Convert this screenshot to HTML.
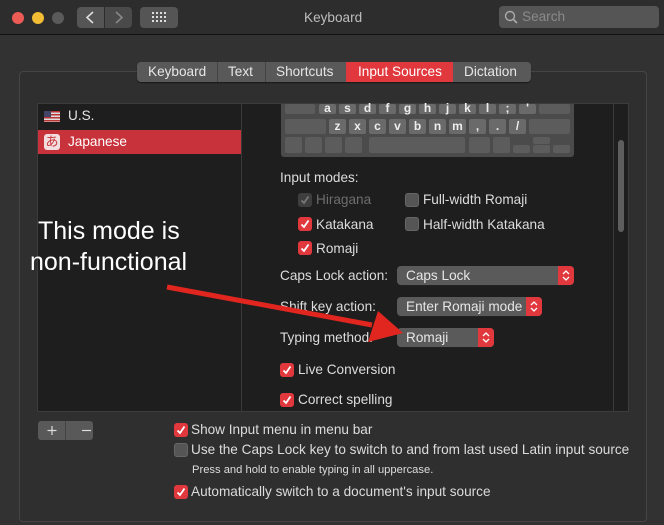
<!DOCTYPE html>
<html><head><meta charset="utf-8"><style>
*{margin:0;padding:0;box-sizing:border-box}
body{width:664px;height:525px;background:#323232;font-family:"Liberation Sans","Noto Sans CJK JP",sans-serif;font-size:13.6px;color:#dcdcdc;position:relative;overflow:hidden}
.a{position:absolute}
.t{position:absolute;white-space:nowrap;line-height:16px}
.cb{position:absolute;width:14px;height:14px;border-radius:3px;background:#e0383d}
.cb svg{position:absolute;left:1px;top:1px}
.cbo{position:absolute;width:14px;height:14px;border-radius:3px;background:#555;border:1px solid #666}
.pop{position:absolute;height:19px;background:#5a5a5a;border-radius:4px;color:#e6e6e6;padding-left:9px;line-height:19px;box-shadow:0 1px 0 #222}
.pop .s{position:absolute;right:0;top:0;width:16px;height:19px;background:#e0383d;border-radius:0 4px 4px 0}
.key{position:absolute;background:#6a6a6a;border-radius:2px;color:#eee;font-weight:bold;font-size:12px;text-align:center;line-height:15px}
.kd{position:absolute;background:#5c5c5c;border-radius:2px}
</style></head><body>
<div class="a" style="left:0;top:0;width:664px;height:35px;background:#2d2d2d;border-bottom:1px solid #111"></div>
<div class="a" style="left:12px;top:12px;width:12px;height:12px;border-radius:6px;background:#ec5c55"></div>
<div class="a" style="left:32px;top:12px;width:12px;height:12px;border-radius:6px;background:#f2bc34"></div>
<div class="a" style="left:52px;top:12px;width:12px;height:12px;border-radius:6px;background:#5a5a5a"></div>
<div class="a" style="left:77px;top:7px;width:27px;height:21px;background:#555;border-radius:4px 0 0 4px"></div>
<div class="a" style="left:105px;top:7px;width:27px;height:21px;background:#4a4a4a;border-radius:0 4px 4px 0"></div>
<svg class="a" style="left:77px;top:7px" width="56" height="21"><path d="M16 5 L10 10.5 L16 16" stroke="#ddd" stroke-width="1.6" fill="none"/><path d="M39 5 L45 10.5 L39 16" stroke="#888" stroke-width="1.6" fill="none"/></svg>
<div class="a" style="left:140px;top:7px;width:38px;height:21px;background:#555;border-radius:4px"></div>
<svg class="a" style="left:152px;top:12px" width="14" height="11" fill="#ddd"><rect x="0" y="0" width="2" height="2"/><rect x="4" y="0" width="2" height="2"/><rect x="8" y="0" width="2" height="2"/><rect x="12" y="0" width="2" height="2"/><rect x="0" y="4" width="2" height="2"/><rect x="4" y="4" width="2" height="2"/><rect x="8" y="4" width="2" height="2"/><rect x="12" y="4" width="2" height="2"/><rect x="0" y="8" width="2" height="2"/><rect x="4" y="8" width="2" height="2"/><rect x="8" y="8" width="2" height="2"/><rect x="12" y="8" width="2" height="2"/></svg>
<div class="t" style="left:304px;top:10px;color:#bdbdbd">Keyboard</div>
<div class="a" style="left:499px;top:6px;width:160px;height:22px;background:#555;border-radius:4px"></div>
<svg class="a" style="left:504px;top:10px" width="14" height="14"><circle cx="6" cy="6" r="4.5" stroke="#aaa" stroke-width="1.4" fill="none"/><path d="M9.5 9.5 L13 13" stroke="#aaa" stroke-width="1.6"/></svg>
<div class="t" style="left:522px;top:9px;color:#8a8a8a">Search</div>
<!-- group box -->
<div class="a" style="left:19px;top:71px;width:628px;height:451px;border:1px solid #454545;border-radius:4px;background:#2f2f2f"></div>
<!-- tabs -->
<div class="a" style="left:137px;top:62px;width:394px;height:20px;background:#595959;border-radius:4px;box-shadow:0 1px 1px #1a1a1a"></div>
<div class="a" style="left:346px;top:62px;width:107px;height:20px;background:#e0383d"></div>
<div class="a" style="left:217px;top:62px;width:1px;height:20px;background:#444"></div>
<div class="a" style="left:265px;top:62px;width:1px;height:20px;background:#444"></div>
<div class="t" style="left:148px;top:64px;color:#e6e6e6">Keyboard</div>
<div class="t" style="left:228px;top:64px;color:#e6e6e6">Text</div>
<div class="t" style="left:276px;top:64px;color:#e6e6e6">Shortcuts</div>
<div class="t" style="left:358px;top:64px;color:#fff">Input Sources</div>
<div class="t" style="left:464px;top:64px;color:#e6e6e6">Dictation</div>
<!-- list -->
<div class="a" style="left:37px;top:103px;width:592px;height:309px;background:#1e1e1e;border:1px solid #3c3c3c"></div>
<div class="a" style="left:241px;top:104px;width:1px;height:307px;background:#3a3a3a"></div>
<div class="a" style="left:613px;top:104px;width:1px;height:307px;background:#3a3a3a"></div>
<div class="a" style="left:618px;top:140px;width:6px;height:92px;background:#5e5e5e;border-radius:3px"></div>
<div class="a" style="left:38px;top:130px;width:203px;height:24px;background:#c8323b"></div>
<svg class="a" style="left:44px;top:111px" width="16" height="11"><rect width="16" height="11" fill="#ddd"/><rect y="0" width="16" height="1.5" fill="#b33"/><rect y="3" width="16" height="1.5" fill="#b33"/><rect y="6" width="16" height="1.5" fill="#b33"/><rect y="9" width="16" height="1.5" fill="#b33"/><rect width="7" height="6" fill="#446"/></svg>
<div class="t" style="left:68px;top:108px;color:#e6e6e6">U.S.</div>
<div class="a" style="left:44px;top:134px;width:16px;height:16px;background:#f2dede;border-radius:3px;color:#c8323b;font-size:13px;line-height:16px;text-align:center">あ</div>
<div class="t" style="left:68px;top:134px;color:#fff">Japanese</div>
<!-- keyboard -->
<div class="a" style="left:281px;top:104px;width:293px;height:53px;background:#4b4b4b;border-radius:0 0 3px 3px"></div>
<div class="kd" style="left:285px;top:104px;width:30px;height:10px"></div>
<div class="key" style="left:319px;top:104px;width:17px;height:10px;line-height:8px">a</div>
<div class="key" style="left:339px;top:104px;width:17px;height:10px;line-height:8px">s</div>
<div class="key" style="left:359px;top:104px;width:17px;height:10px;line-height:8px">d</div>
<div class="key" style="left:379px;top:104px;width:17px;height:10px;line-height:8px">f</div>
<div class="key" style="left:399px;top:104px;width:17px;height:10px;line-height:8px">g</div>
<div class="key" style="left:419px;top:104px;width:17px;height:10px;line-height:8px">h</div>
<div class="key" style="left:439px;top:104px;width:17px;height:10px;line-height:8px">j</div>
<div class="key" style="left:459px;top:104px;width:17px;height:10px;line-height:8px">k</div>
<div class="key" style="left:479px;top:104px;width:17px;height:10px;line-height:8px">l</div>
<div class="key" style="left:499px;top:104px;width:17px;height:10px;line-height:8px">;</div>
<div class="key" style="left:519px;top:104px;width:17px;height:10px;line-height:8px">'</div>
<div class="kd" style="left:539px;top:104px;width:31px;height:10px"></div>
<div class="kd" style="left:285px;top:119px;width:41px;height:15px"></div>
<div class="key" style="left:329px;top:119px;width:17px;height:15px">z</div>
<div class="key" style="left:349px;top:119px;width:17px;height:15px">x</div>
<div class="key" style="left:369px;top:119px;width:17px;height:15px">c</div>
<div class="key" style="left:389px;top:119px;width:17px;height:15px">v</div>
<div class="key" style="left:409px;top:119px;width:17px;height:15px">b</div>
<div class="key" style="left:429px;top:119px;width:17px;height:15px">n</div>
<div class="key" style="left:449px;top:119px;width:17px;height:15px">m</div>
<div class="key" style="left:469px;top:119px;width:17px;height:15px">,</div>
<div class="key" style="left:489px;top:119px;width:17px;height:15px">.</div>
<div class="key" style="left:509px;top:119px;width:17px;height:15px">/</div>
<div class="kd" style="left:529px;top:119px;width:41px;height:15px"></div>
<div class="kd" style="left:285px;top:137px;width:17px;height:16px"></div>
<div class="kd" style="left:305px;top:137px;width:17px;height:16px"></div>
<div class="kd" style="left:325px;top:137px;width:17px;height:16px"></div>
<div class="kd" style="left:345px;top:137px;width:17px;height:16px"></div>
<div class="kd" style="left:369px;top:137px;width:96px;height:16px"></div>
<div class="kd" style="left:469px;top:137px;width:21px;height:16px"></div>
<div class="kd" style="left:493px;top:137px;width:17px;height:16px"></div>
<div class="kd" style="left:513px;top:145px;width:17px;height:8px"></div>
<div class="kd" style="left:533px;top:137px;width:17px;height:7px"></div>
<div class="kd" style="left:533px;top:145px;width:17px;height:8px"></div>
<div class="kd" style="left:553px;top:145px;width:17px;height:8px"></div>
<!-- right pane -->
<div class="t" style="left:280px;top:170px">Input modes:</div>
<div class="a" style="left:298px;top:193px;width:14px;height:14px;border-radius:3px;background:#3e3e3e"></div>
<svg class="a" style="left:299px;top:194px" width="12" height="12"><path d="M2.5 6.5 L5 9 L9.5 2.5" stroke="#777" stroke-width="1.8" fill="none"/></svg>
<div class="t" style="left:316px;top:192px;color:#6e6e6e">Hiragana</div>
<div class="cbo" style="left:405px;top:193px"></div>
<div class="t" style="left:423px;top:192px">Full-width Romaji</div>
<div class="cb" style="left:298px;top:217px"><svg width="12" height="12"><path d="M2.5 6.5 L5 9 L9.5 2.5" stroke="#fff" stroke-width="1.8" fill="none"/></svg></div>
<div class="t" style="left:316px;top:217px">Katakana</div>
<div class="cbo" style="left:405px;top:217px"></div>
<div class="t" style="left:423px;top:217px">Half-width Katakana</div>
<div class="cb" style="left:298px;top:241px"><svg width="12" height="12"><path d="M2.5 6.5 L5 9 L9.5 2.5" stroke="#fff" stroke-width="1.8" fill="none"/></svg></div>
<div class="t" style="left:316px;top:241px">Romaji</div>
<div class="t" style="left:280px;top:268px">Caps Lock action:</div>
<div class="pop" style="left:397px;top:266px;width:177px">Caps Lock<div class="s"></div></div>
<div class="t" style="left:280px;top:299px">Shift key action:</div>
<div class="pop" style="left:397px;top:297px;width:145px">Enter Romaji mode<div class="s"></div></div>
<div class="t" style="left:280px;top:330px">Typing method:</div>
<div class="pop" style="left:397px;top:328px;width:97px">Romaji<div class="s"></div></div>
<div class="cb" style="left:280px;top:363px"><svg width="12" height="12"><path d="M2.5 6.5 L5 9 L9.5 2.5" stroke="#fff" stroke-width="1.8" fill="none"/></svg></div>
<div class="t" style="left:298px;top:362px">Live Conversion</div>
<div class="cb" style="left:280px;top:393px"><svg width="12" height="12"><path d="M2.5 6.5 L5 9 L9.5 2.5" stroke="#fff" stroke-width="1.8" fill="none"/></svg></div>
<div class="t" style="left:298px;top:392px">Correct spelling</div>
<svg class="a" style="left:558px;top:266px" width="16" height="19"><path d="M5 8 L8 5 L11 8 M5 11 L8 14 L11 11" stroke="#fff" stroke-width="1.3" fill="none"/></svg>
<svg class="a" style="left:526px;top:297px" width="16" height="19"><path d="M5 8 L8 5 L11 8 M5 11 L8 14 L11 11" stroke="#fff" stroke-width="1.3" fill="none"/></svg>
<svg class="a" style="left:478px;top:328px" width="16" height="19"><path d="M5 8 L8 5 L11 8 M5 11 L8 14 L11 11" stroke="#fff" stroke-width="1.3" fill="none"/></svg>
<!-- bottom -->
<div class="a" style="left:38px;top:421px;width:55px;height:19px;background:#595959;border-radius:3px"></div>
<div class="a" style="left:65px;top:421px;width:1px;height:19px;background:#444"></div>
<svg class="a" style="left:38px;top:421px" width="55" height="19"><path d="M14 5 V14 M9.5 9.5 H18.5" stroke="#ddd" stroke-width="1.2"/><path d="M44 9.5 H53" stroke="#ddd" stroke-width="1.2"/></svg>
<div class="cb" style="left:174px;top:423px"><svg width="12" height="12"><path d="M2.5 6.5 L5 9 L9.5 2.5" stroke="#fff" stroke-width="1.8" fill="none"/></svg></div>
<div class="t" style="left:191px;top:422px">Show Input menu in menu bar</div>
<div class="cbo" style="left:174px;top:443px"></div>
<div class="t" style="left:191px;top:442px">Use the Caps Lock key to switch to and from last used Latin input source</div>
<div class="t" style="left:192px;top:462px;font-size:11.2px">Press and hold to enable typing in all uppercase.</div>
<div class="cb" style="left:174px;top:485px"><svg width="12" height="12"><path d="M2.5 6.5 L5 9 L9.5 2.5" stroke="#fff" stroke-width="1.8" fill="none"/></svg></div>
<div class="t" style="left:191px;top:484px">Automatically switch to a document's input source</div>
<!-- annotation -->
<div class="t" style="left:38px;top:217px;font-size:25px;line-height:28px;color:#fff">This mode is</div>
<div class="t" style="left:30px;top:248px;font-size:25px;line-height:28px;color:#fff">non-functional</div>
<svg class="a" style="left:0;top:0" width="664" height="525"><path d="M167 287 L372 325" stroke="#e0261e" stroke-width="5"/><path d="M403 333 L368 342 L378 311 Z" fill="#e0261e"/></svg>
</body></html>
